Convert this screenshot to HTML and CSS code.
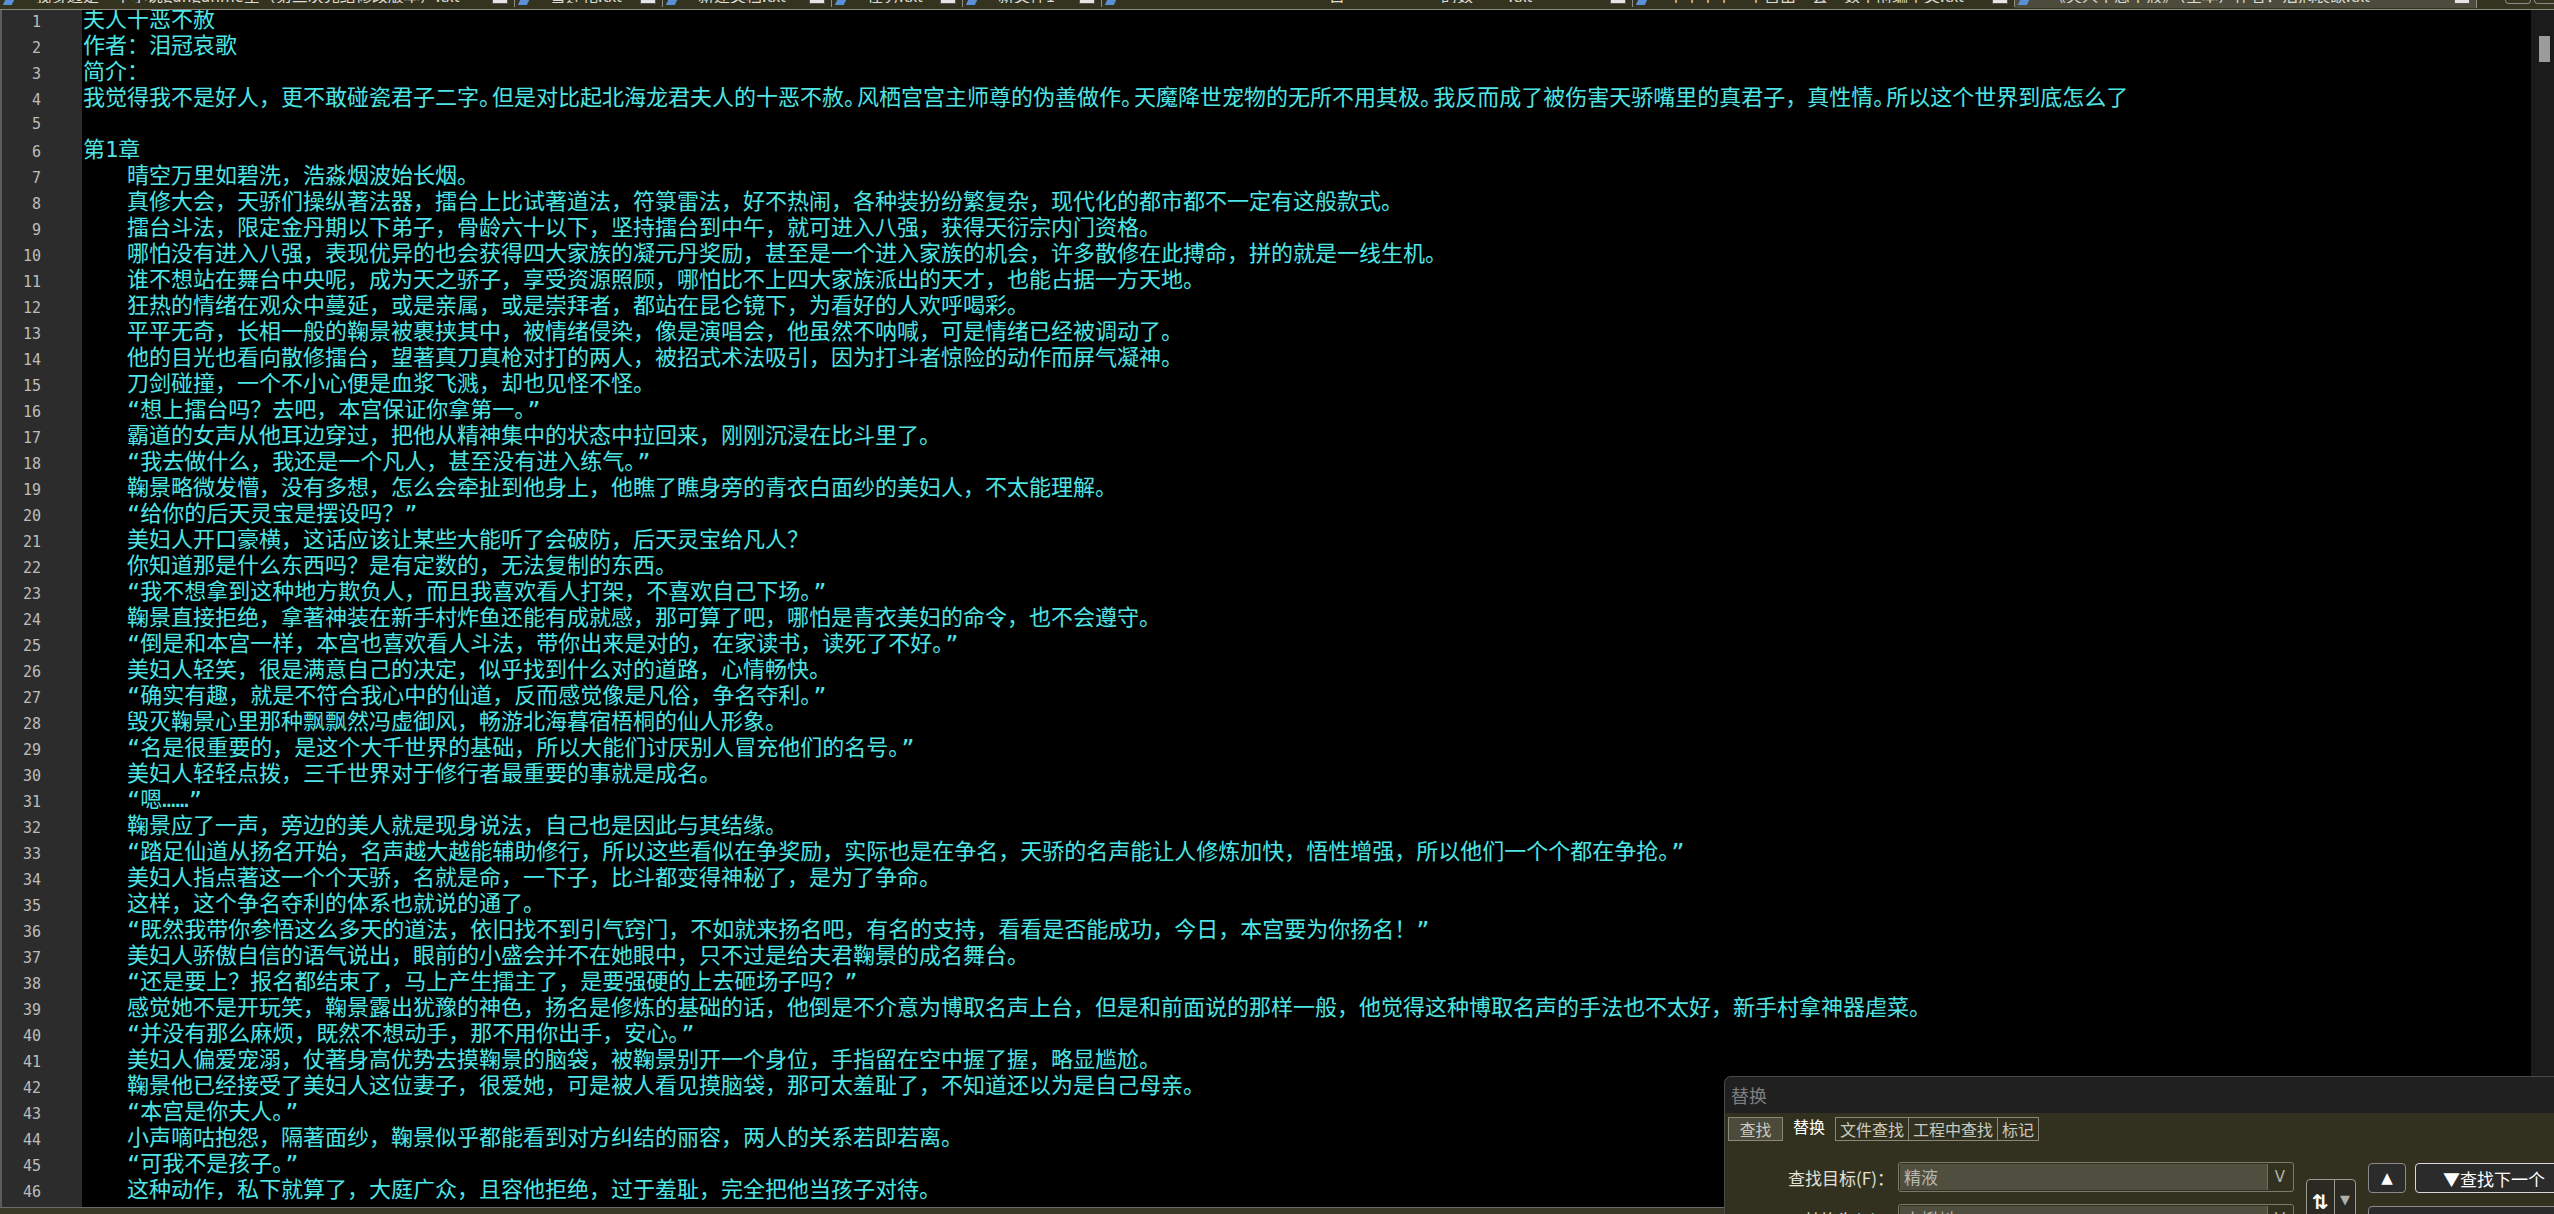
FILE: index.html
```html
<!DOCTYPE html>
<html lang="zh-CN">
<head>
    <meta charset="UTF-8">
    <title>夫人十恶不赦.txt - Notepad++</title>
    <link rel="stylesheet" href="styles.css">
</head>
<body>
<div class="window">
    <div class="tabbar">
        <div class="tab"><span class="tab-icon"></span><span class="tab-name">我身边是一个小说gungunme全（第三次完结修改版本）.txt</span><span class="tab-close"></span></div>
        <div class="tab"><span class="tab-icon"></span><span class="tab-name">雪莲花.txt</span><span class="tab-close"></span></div>
        <div class="tab"><span class="tab-icon"></span><span class="tab-name">新建文档.txt</span><span class="tab-close"></span></div>
        <div class="tab"><span class="tab-icon"></span><span class="tab-name">任务.txt</span><span class="tab-close"></span></div>
        <div class="tab"><span class="tab-icon"></span><span class="tab-name">新文件1</span><span class="tab-close"></span></div>
        <div class="tab"><span class="tab-icon"></span><span class="tab-name">　　　　　　　　　　　　目　　　　　　的数　　 .txt</span><span class="tab-close"></span></div>
        <div class="tab"><span class="tab-icon"></span><span class="tab-name">中午中午一中自由　会　数十前编中文.txt</span><span class="tab-close"></span></div>
        <div class="tab active"><span class="tab-icon"></span><span class="tab-name">《夫人十恶不赦》（全本）作者：泪冠哀歌.txt</span><span class="tab-close"></span></div>
        <div class="tab-buttons"><span class="tab-btn"></span><span class="tab-btn"></span></div>
    </div>

    <div class="main">
        <div class="editor">
            <div class="lines">
                <div class="row"><span class="ln">1</span><span class="tx">夫人十恶不赦</span></div>
                <div class="row"><span class="ln">2</span><span class="tx">作者：泪冠哀歌</span></div>
                <div class="row"><span class="ln">3</span><span class="tx">简介：</span></div>
                <div class="row"><span class="ln">4</span><span class="tx">我觉得我不是好人，更不敢碰瓷君子二字。但是对比起北海龙君夫人的十恶不赦。风栖宫宫主师尊的伪善做作。天魔降世宠物的无所不用其极。我反而成了被伤害天骄嘴里的真君子，真性情。所以这个世界到底怎么了</span></div>
                <div class="row"><span class="ln">5</span><span class="tx"></span></div>
                <div class="row"><span class="ln">6</span><span class="tx">第1章</span></div>
                <div class="row"><span class="ln">7</span><span class="tx">　　晴空万里如碧洗，浩淼烟波始长烟。</span></div>
                <div class="row"><span class="ln">8</span><span class="tx">　　真修大会，天骄们操纵著法器，擂台上比试著道法，符箓雷法，好不热闹，各种装扮纷繁复杂，现代化的都市都不一定有这般款式。</span></div>
                <div class="row"><span class="ln">9</span><span class="tx">　　擂台斗法，限定金丹期以下弟子，骨龄六十以下，坚持擂台到中午，就可进入八强，获得天衍宗内门资格。</span></div>
                <div class="row"><span class="ln">10</span><span class="tx">　　哪怕没有进入八强，表现优异的也会获得四大家族的凝元丹奖励，甚至是一个进入家族的机会，许多散修在此搏命，拼的就是一线生机。</span></div>
                <div class="row"><span class="ln">11</span><span class="tx">　　谁不想站在舞台中央呢，成为天之骄子，享受资源照顾，哪怕比不上四大家族派出的天才，也能占据一方天地。</span></div>
                <div class="row"><span class="ln">12</span><span class="tx">　　狂热的情绪在观众中蔓延，或是亲属，或是崇拜者，都站在昆仑镜下，为看好的人欢呼喝彩。</span></div>
                <div class="row"><span class="ln">13</span><span class="tx">　　平平无奇，长相一般的鞠景被裹挟其中，被情绪侵染，像是演唱会，他虽然不呐喊，可是情绪已经被调动了。</span></div>
                <div class="row"><span class="ln">14</span><span class="tx">　　他的目光也看向散修擂台，望著真刀真枪对打的两人，被招式术法吸引，因为打斗者惊险的动作而屏气凝神。</span></div>
                <div class="row"><span class="ln">15</span><span class="tx">　　刀剑碰撞，一个不小心便是血浆飞溅，却也见怪不怪。</span></div>
                <div class="row"><span class="ln">16</span><span class="tx">　　“想上擂台吗？去吧，本宫保证你拿第一。”</span></div>
                <div class="row"><span class="ln">17</span><span class="tx">　　霸道的女声从他耳边穿过，把他从精神集中的状态中拉回来，刚刚沉浸在比斗里了。</span></div>
                <div class="row"><span class="ln">18</span><span class="tx">　　“我去做什么，我还是一个凡人，甚至没有进入练气。”</span></div>
                <div class="row"><span class="ln">19</span><span class="tx">　　鞠景略微发懵，没有多想，怎么会牵扯到他身上，他瞧了瞧身旁的青衣白面纱的美妇人，不太能理解。</span></div>
                <div class="row"><span class="ln">20</span><span class="tx">　　“给你的后天灵宝是摆设吗？”</span></div>
                <div class="row"><span class="ln">21</span><span class="tx">　　美妇人开口豪横，这话应该让某些大能听了会破防，后天灵宝给凡人？</span></div>
                <div class="row"><span class="ln">22</span><span class="tx">　　你知道那是什么东西吗？是有定数的，无法复制的东西。</span></div>
                <div class="row"><span class="ln">23</span><span class="tx">　　“我不想拿到这种地方欺负人，而且我喜欢看人打架，不喜欢自己下场。”</span></div>
                <div class="row"><span class="ln">24</span><span class="tx">　　鞠景直接拒绝，拿著神装在新手村炸鱼还能有成就感，那可算了吧，哪怕是青衣美妇的命令，也不会遵守。</span></div>
                <div class="row"><span class="ln">25</span><span class="tx">　　“倒是和本宫一样，本宫也喜欢看人斗法，带你出来是对的，在家读书，读死了不好。”</span></div>
                <div class="row"><span class="ln">26</span><span class="tx">　　美妇人轻笑，很是满意自己的决定，似乎找到什么对的道路，心情畅快。</span></div>
                <div class="row"><span class="ln">27</span><span class="tx">　　“确实有趣，就是不符合我心中的仙道，反而感觉像是凡俗，争名夺利。”</span></div>
                <div class="row"><span class="ln">28</span><span class="tx">　　毁灭鞠景心里那种飘飘然冯虚御风，畅游北海暮宿梧桐的仙人形象。</span></div>
                <div class="row"><span class="ln">29</span><span class="tx">　　“名是很重要的，是这个大千世界的基础，所以大能们讨厌别人冒充他们的名号。”</span></div>
                <div class="row"><span class="ln">30</span><span class="tx">　　美妇人轻轻点拨，三千世界对于修行者最重要的事就是成名。</span></div>
                <div class="row"><span class="ln">31</span><span class="tx">　　“嗯……”</span></div>
                <div class="row"><span class="ln">32</span><span class="tx">　　鞠景应了一声，旁边的美人就是现身说法，自己也是因此与其结缘。</span></div>
                <div class="row"><span class="ln">33</span><span class="tx">　　“踏足仙道从扬名开始，名声越大越能辅助修行，所以这些看似在争奖励，实际也是在争名，天骄的名声能让人修炼加快，悟性增强，所以他们一个个都在争抢。”</span></div>
                <div class="row"><span class="ln">34</span><span class="tx">　　美妇人指点著这一个个天骄，名就是命，一下子，比斗都变得神秘了，是为了争命。</span></div>
                <div class="row"><span class="ln">35</span><span class="tx">　　这样，这个争名夺利的体系也就说的通了。</span></div>
                <div class="row"><span class="ln">36</span><span class="tx">　　“既然我带你参悟这么多天的道法，依旧找不到引气窍门，不如就来扬名吧，有名的支持，看看是否能成功，今日，本宫要为你扬名！”</span></div>
                <div class="row"><span class="ln">37</span><span class="tx">　　美妇人骄傲自信的语气说出，眼前的小盛会并不在她眼中，只不过是给夫君鞠景的成名舞台。</span></div>
                <div class="row"><span class="ln">38</span><span class="tx">　　“还是要上？报名都结束了，马上产生擂主了，是要强硬的上去砸场子吗？”</span></div>
                <div class="row"><span class="ln">39</span><span class="tx">　　感觉她不是开玩笑，鞠景露出犹豫的神色，扬名是修炼的基础的话，他倒是不介意为博取名声上台，但是和前面说的那样一般，他觉得这种博取名声的手法也不太好，新手村拿神器虐菜。</span></div>
                <div class="row"><span class="ln">40</span><span class="tx">　　“并没有那么麻烦，既然不想动手，那不用你出手，安心。”</span></div>
                <div class="row"><span class="ln">41</span><span class="tx">　　美妇人偏爱宠溺，仗著身高优势去摸鞠景的脑袋，被鞠景别开一个身位，手指留在空中握了握，略显尴尬。</span></div>
                <div class="row"><span class="ln">42</span><span class="tx">　　鞠景他已经接受了美妇人这位妻子，很爱她，可是被人看见摸脑袋，那可太羞耻了，不知道还以为是自己母亲。</span></div>
                <div class="row"><span class="ln">43</span><span class="tx">　　“本宫是你夫人。”</span></div>
                <div class="row"><span class="ln">44</span><span class="tx">　　小声嘀咕抱怨，隔著面纱，鞠景似乎都能看到对方纠结的丽容，两人的关系若即若离。</span></div>
                <div class="row"><span class="ln">45</span><span class="tx">　　“可我不是孩子。”</span></div>
                <div class="row"><span class="ln">46</span><span class="tx">　　这种动作，私下就算了，大庭广众，且容他拒绝，过于羞耻，完全把他当孩子对待。</span></div>
            </div>
        </div>
        <div class="scrollbar"><div class="thumb"></div></div>
    </div>

    <div class="statusbar"></div>
</div>

<div class="dialog">
    <div class="dialog-title">替换</div>
    <div class="dialog-tabs">
        <span class="dtab dtab-find">查找</span>
        <span class="dtab dtab-active">替换</span>
        <span class="dtab">文件查找</span>
        <span class="dtab">工程中查找</span>
        <span class="dtab">标记</span>
    </div>
    <div class="dialog-form">
        <div class="fields">
            <div class="field">
                <label class="field-label">查找目标(F)：</label>
                <div class="combo"><span class="combo-value">精液</span><span class="combo-arrow">V</span></div>
            </div>
            <div class="field">
                <label class="field-label">替换为(P)：</label>
                <div class="combo"><span class="combo-value">小蝌蚪</span><span class="combo-arrow">V</span></div>
            </div>
        </div>
        <div class="swap"><span class="swap-icon">⇅</span><span class="swap-arrow">▼</span></div>
        <div class="actions">
            <div class="action-row">
                <button class="btn btn-up">▲</button>
                <button class="btn btn-next">▼查找下一个</button>
            </div>
            <div class="action-row">
                <button class="btn btn-wide">替换</button>
            </div>
        </div>
    </div>
</div>

<script>
    // the editor font draws the full stop half-width
    document.querySelectorAll('.tx').forEach(function(line) {
        line.innerHTML = line.textContent.replace(/。/g, '<span class="stop">。</span>');
    });
</script>
</body>
</html>
```

FILE: styles.css
```css
body {
    margin: 0;
    padding: 0;
    background-color: #000;
    width: 2554px;
    height: 1214px;
    overflow: hidden;
    position: relative;
    font-family: "DejaVu Sans", "Noto Sans CJK SC", sans-serif;
}
.window {
    display: flex;
    flex-direction: column;
    height: 100%;
}

/* top tab strip, scrolled mostly out of view */
.tabbar {
    display: flex;
    height: 9px;
    background-color: #34331f;
    border-bottom: 1px solid #8a8a80;
    overflow: hidden;
    flex-shrink: 0;
}
.tab {
    display: flex;
    align-items: flex-start;
    height: 7px;
    border-right: 1px solid #8f8f86;
    box-sizing: border-box;
    overflow: hidden;
    flex-shrink: 0;
}
.tab:nth-child(1) { width: 515px; }
.tab:nth-child(2) { width: 148px; }
.tab:nth-child(3) { width: 169px; }
.tab:nth-child(4) { width: 131px; }
.tab:nth-child(5) { width: 139px; }
.tab:nth-child(6) { width: 531px; }
.tab:nth-child(7) { width: 382px; }
.tab:nth-child(8) { width: 462px; }
.tab.active {
    background-color: #4d4c3c;
    height: 8px;
}
.tab-icon {
    width: 9px;
    height: 5px;
    margin: 0 0 0 4px;
    background-color: #5b8fd6;
    transform: skewX(-25deg);
    flex-shrink: 0;
}
.tab-name {
    flex: 1;
    padding-left: 22px;
    font-family: "Noto Sans CJK SC", sans-serif;
    font-size: 16px;
    line-height: 16px;
    margin-top: -13px;
    color: #dcdcd4;
    white-space: nowrap;
    overflow: hidden;
}
.tab-close {
    width: 14px;
    height: 3px;
    margin: 0 6px 0 4px;
    background-color: #e4e4e4;
    border: 1px solid #555;
    border-top: none;
    flex-shrink: 0;
}
.tab-buttons {
    display: flex;
    gap: 3px;
    margin-left: 28px;
}
.tab-btn {
    width: 24px;
    height: 3px;
    border: 1px solid #8a8a8a;
    border-top: none;
    border-radius: 0 0 5px 5px;
}

/* editor */
.main {
    flex: 1;
    display: flex;
    min-height: 0;
}
.editor {
    flex: 1;
    overflow: hidden;
    background: linear-gradient(to right, #5c5c5c 0, #5c5c5c 2px, #2c2c2c 2px, #2c2c2c 82px, #000 82px);
}
.lines {
    margin-top: -3px;
}
.row {
    display: flex;
    align-items: baseline;
    height: 26px;
    line-height: 26px;
}
.ln {
    width: 82px;
    box-sizing: border-box;
    padding-right: 41px;
    text-align: right;
    font-family: "DejaVu Sans Mono", monospace;
    font-size: 15px;
    color: #bdbdbd;
    flex-shrink: 0;
}
.tx {
    padding-left: 1px;
    font-family: "DejaVu Sans Mono", "Noto Sans CJK SC", monospace;
    font-size: 22px;
    color: #4fe5e5;
    white-space: pre;
}
.stop {
    font-feature-settings: "halt" 1;
    letter-spacing: 2px;
}
.scrollbar {
    width: 23px;
    background-color: #1b1b1b;
    flex-shrink: 0;
}
.thumb {
    margin: 26px 0 0 8px;
    width: 11px;
    height: 26px;
    background-color: #9b9b9b;
}
.statusbar {
    height: 6px;
    flex-shrink: 0;
    background-color: #3a3928;
    border-top: 1px solid #6b6b63;
}

/* find / replace dialog */
.dialog {
    position: absolute;
    left: 1724px;
    top: 1076px;
    right: -40px;
    bottom: -60px;
    background-color: #32311f;
    border: 1px solid #4a4a46;
    border-radius: 7px 0 0 0;
    font-family: "Noto Sans CJK SC", sans-serif;
    color: #dcdcd4;
}
.dialog-title {
    height: 36px;
    line-height: 36px;
    padding-left: 6px;
    background-color: #202020;
    border-radius: 7px 0 0 0;
    font-size: 18px;
    color: #7e7e7e;
}
.dialog-tabs {
    display: flex;
    margin: 4px 0 0 3px;
    height: 24px;
}
.dtab {
    box-sizing: border-box;
    height: 24px;
    line-height: 22px;
    padding: 0 4px;
    border: 1px solid #8a8978;
    border-left: none;
    font-size: 16px;
    color: #c9c9bf;
}
.dtab-find {
    width: 55px;
    border-left: 1px solid #8a8978;
    background-color: #4b4a3b;
    text-align: center;
}
.dtab-active {
    width: 53px;
    border: none;
    border-right: 1px solid #8a8978;
    text-align: center;
    color: #fff;
    line-height: 18px;
}
.dialog-form {
    display: flex;
    align-items: flex-start;
    margin-top: 21px;
}
.fields {
    display: flex;
    flex-direction: column;
    gap: 12px;
}
.field {
    display: flex;
    align-items: center;
    height: 30px;
}
.field-label {
    width: 169px;
    text-align: right;
    font-size: 17px;
    color: #e2e2da;
}
.combo {
    display: flex;
    margin-left: 4px;
    width: 396px;
    height: 30px;
    box-sizing: border-box;
    border: 1px solid #7b7a6c;
    border-radius: 3px;
    padding: 1px;
}
.combo-value {
    flex: 1;
    background-color: #4f4e3f;
    padding-left: 4px;
    font-size: 17px;
    line-height: 26px;
    color: #b9b9b0;
}
.combo-arrow {
    width: 24px;
    border-left: 1px solid #6e6d60;
    text-align: center;
    font-family: "DejaVu Sans", sans-serif;
    font-size: 15px;
    line-height: 26px;
    color: #b4b4aa;
}
.swap {
    display: flex;
    margin: 17px 0 0 12px;
    width: 50px;
    height: 48px;
    box-sizing: border-box;
    border: 1px solid #9a9a90;
    border-radius: 4px;
    background-color: #2a2a22;
}
.swap-icon {
    width: 27px;
    border-right: 1px solid #9a9a90;
    text-align: center;
    font-family: "DejaVu Sans", sans-serif;
    font-weight: bold;
    font-size: 20px;
    line-height: 44px;
    color: #fff;
}
.swap-arrow {
    flex: 1;
    text-align: center;
    font-family: "DejaVu Sans", sans-serif;
    font-size: 13px;
    line-height: 40px;
    color: #b0b0a8;
}
.actions {
    display: flex;
    flex-direction: column;
    gap: 13px;
    margin-left: 12px;
    margin-top: 1px;
}
.action-row {
    display: flex;
    gap: 9px;
}
.btn {
    height: 30px;
    box-sizing: border-box;
    border: 1px solid #8a8a8a;
    border-radius: 4px;
    background-color: #2b2b2b;
    color: #fff;
    font-family: "Noto Sans CJK SC", sans-serif;
    font-size: 17px;
    padding: 0;
}
.btn-up {
    width: 38px;
    font-family: "DejaVu Sans", sans-serif;
    font-size: 15px;
}
.btn-next {
    width: 160px;
    border-color: #d8d8d8;
    text-align: left;
    padding-left: 27px;
}
.btn-wide {
    width: 210px;
}
```
